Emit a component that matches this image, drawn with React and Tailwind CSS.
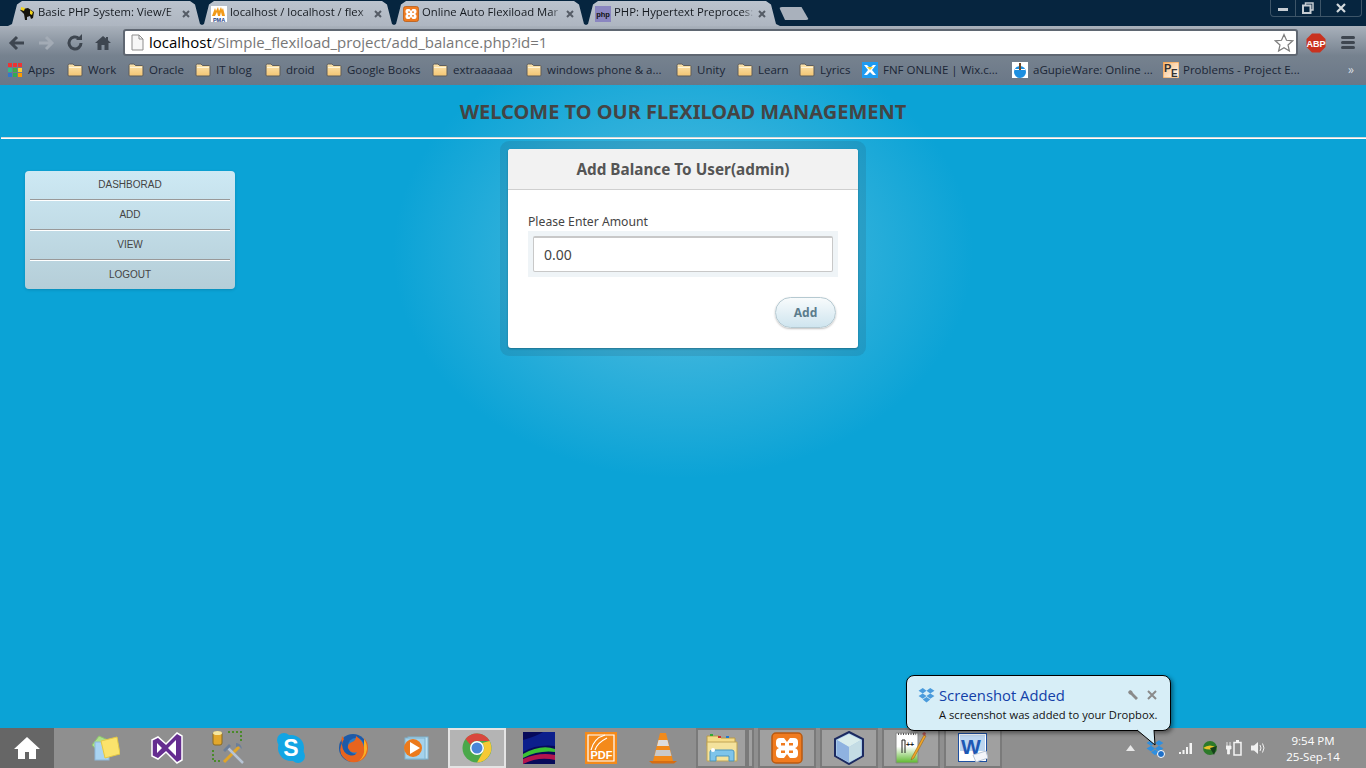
import React from "react";

const Folder = () => (
  <svg width="16" height="14" viewBox="0 0 16 14" className="shrink-0">
    <defs><linearGradient id="fg" x1="0" y1="0" x2="0" y2="1"><stop offset="0" stopColor="#fbe4ae" /><stop offset="1" stopColor="#f4c673" /></linearGradient></defs>
    <path d="M1 2.5Q1 1 2.5 1H6L7.5 2.5H14Q15 2.5 15 3.5V12Q15 13 14 13H2Q1 13 1 12Z" fill="url(#fg)" stroke="#5d5d5d" strokeWidth="1" />
    <path d="M2 4.5H14" stroke="#fff3d4" />
  </svg>
);
const Apps = () => (
  <svg width="14" height="14" viewBox="0 0 14 14" className="shrink-0">
    {[["#e33", "#e33", "#e33"], ["#3b8", "#4a4", "#fc3"], ["#37c", "#3a5", "#f90"]].map((r, y) =>
      r.map((c, x) => <rect key={x + "-" + y} x={x * 5} y={y * 5} width="4" height="4" fill={c} />))}
  </svg>
);
const Xampp = ({ s = 16 }) => (
  <svg width={s} height={s} viewBox="0 0 32 32" className="shrink-0">
    <rect x="1" y="1" width="30" height="30" rx="4" fill="#f07b1f" stroke="#b85a12" strokeWidth="1.5" />
    <path d="M9 6h4l3 4 3-4h4q4 0 4 4v2q0 3-3 4 3 1 3 4v2q0 4-4 4h-4l-3-4-3 4H9q-4 0-4-4v-2q0-3 3-4-3-1-3-4v-2q0-4 4-4Z" fill="#fff" />
    <path d="M10 11h4v2.500h-4zM18 11h4v2.500h-4zM10 18.500h4v2.500h-4zM18 18.500h4v2.500h-4z" fill="#f07b1f" />
  </svg>
);
const Elephant = () => (
  <svg width="16" height="16" viewBox="0 0 16 16" className="shrink-0">
    <path d="M4 3 9 2l6 4-1 6-2 1-1-3-3 1v3H6L5 8 1 4Z" fill="#16140c" />
    <path d="M2 1l4 1-1 3-3-1ZM11 4l3 2-1 3-2-1Z" fill="#f2d41c" />
  </svg>
);
const Pma = () => (
  <svg width="16" height="16" viewBox="0 0 16 16" className="shrink-0">
    <rect width="16" height="16" fill="#fff" />
    <path d="M1 10 4 2l1 3 2-4 1 4 2-4 1 3 1-2 2 8h-3L10 6l-1 4H7L6 6l-2 4Z" fill="#f29a18" />
    <text x="8" y="15.5" fontSize="5.5" fontWeight="700" textAnchor="middle" fill="#1c3e86" fontFamily="Liberation Sans, sans-serif">PMA</text>
  </svg>
);
const Php = () => (
  <svg width="16" height="16" viewBox="0 0 16 16" className="shrink-0">
    <rect width="16" height="16" fill="#8a86c0" />
    <text x="8" y="11" fontSize="7.5" fontWeight="700" textAnchor="middle" fill="#111" fontFamily="Liberation Sans, sans-serif">php</text>
  </svg>
);
const Wix = () => (
  <svg width="16" height="16" viewBox="0 0 16 16" className="shrink-0">
    <rect width="16" height="16" fill="#1f9bf0" />
    <path d="M2 3h3l3 3 3-3h3L10 8l4 5h-3L8 10l-3 3H2l4-5Z" fill="#fff" />
    <path d="M5 5h6L8 8Z" fill="#f6d22e" />
  </svg>
);
const Gupie = () => (
  <svg width="16" height="16" viewBox="0 0 16 16" className="shrink-0">
    <rect width="16" height="16" fill="#fff" />
    <circle cx="8" cy="10" r="6" fill="#1d8fe0" />
    <path d="M3 8h10v-1H3Z" fill="#fff" />
    <path d="M7 1h2v7H7Z" fill="#6b4a2a" />
  </svg>
);
const Pe = () => (
  <svg width="16" height="16" viewBox="0 0 16 16" className="shrink-0">
    <defs><linearGradient id="peg" x1="0" y1="0" x2="1" y2="1"><stop offset="0" stopColor="#f9b670" /><stop offset="1" stopColor="#fff" /></linearGradient></defs>
    <rect width="16" height="16" fill="url(#peg)" stroke="#f19a3e" />
    <text x="1" y="10" fontSize="11" fontWeight="700" fill="#333" fontFamily="Liberation Sans, sans-serif">P</text>
    <text x="8" y="15" fontSize="10" fontWeight="700" fill="#333" fontFamily="Liberation Sans, sans-serif">E</text>
  </svg>
);

const tabs = [
  { icon: <Elephant />, title: "Basic PHP System: View/E" },
  { icon: <Pma />, title: "localhost / localhost / flex" },
  { icon: <Xampp />, title: "Online Auto Flexiload Mar" },
  { icon: <Php />, title: "PHP: Hypertext Preproces:" },
];

const Tab = ({ icon, title }) => (
  <div className="w-[196px] h-[25px] -mr-[4px] flex items-center pl-[11px] pr-[13px] bg-gradient-to-b from-[#bbc3cd] to-[#aeb6c1] [clip-path:polygon(0_100%,4px_92%,9px_14%,14px_0,calc(100%-14px)_0,calc(100%-9px)_14%,calc(100%-4px)_92%,100%_100%)]">
    {icon}
    <span className="ml-[3px] w-[140px] pb-[2px] overflow-hidden whitespace-nowrap text-[11.3px] text-[#151a20] [mask-image:linear-gradient(to_right,#000_92%,transparent)]">{title}</span>
    <svg width="10" height="10" viewBox="0 0 10 10" className="ml-auto shrink-0"><path d="M2 2l6 6M8 2l-6 6" stroke="#555c66" strokeWidth="2" /></svg>
  </div>
);

const bookmarks = [
  { icon: <Apps />, label: "Apps", w: "w-[27px]", gap: "ml-[6px]", lead: "ml-0" },
  { icon: <Folder />, label: "Work", w: "w-[28px]", gap: "ml-[5px]", lead: "ml-[12px]" },
  { icon: <Folder />, label: "Oracle", w: "w-[34px]", gap: "ml-[5px]", lead: "ml-[12px]" },
  { icon: <Folder />, label: "IT blog", w: "w-[37px]", gap: "ml-[5px]", lead: "ml-[12px]" },
  { icon: <Folder />, label: "droid", w: "w-[28px]", gap: "ml-[5px]", lead: "ml-[12px]" },
  { icon: <Folder />, label: "Google Books", w: "w-[73px]", gap: "ml-[5px]", lead: "ml-[12px]" },
  { icon: <Folder />, label: "extraaaaaa", w: "w-[61px]", gap: "ml-[5px]", lead: "ml-[12px]" },
  { icon: <Folder />, label: "windows phone & a...", w: "w-[115px]", gap: "ml-[5px]", lead: "ml-[12px]" },
  { icon: <Folder />, label: "Unity", w: "w-[28px]", gap: "ml-[5px]", lead: "ml-[14px]" },
  { icon: <Folder />, label: "Learn", w: "w-[29px]", gap: "ml-[5px]", lead: "ml-[12px]" },
  { icon: <Folder />, label: "Lyrics", w: "w-[30px]", gap: "ml-[5px]", lead: "ml-[12px]" },
  { icon: <Wix />, label: "FNF ONLINE | Wix.c...", w: "w-[113px]", gap: "ml-[5px]", lead: "ml-[12px]" },
  { icon: <Gupie />, label: "aGupieWare: Online ...", w: "w-[117px]", gap: "ml-[5px]", lead: "ml-[16px]" },
  { icon: <Pe />, label: "Problems - Project E...", w: "w-[116px]", gap: "ml-[4px]", lead: "ml-[13px]" },
];

const Slot = ({ children, boxed, active }) => (
  <div className={"w-[58px] h-[40px] flex items-center justify-center relative " + (active ? "bg-[#b4b4b4] border-2 border-[#e4e4e4]" : boxed ? "bg-[#a0a0a0] border-2 border-[#7a7a7a]" : "")}>
    {children}
  </div>
);

const StickyIcon = () => (
  <svg width="32" height="32" viewBox="0 0 32 32" className="-ml-[3px]">
    <path d="M4 13 11 4l9 4-6 16Z" fill="#aee08a" stroke="#8ec46e" />
    <rect x="7" y="10" width="14" height="18" fill="#a9d4f2" stroke="#8db8db" />
    <path d="M13 9 29 5l3 17-15 4Z" fill="#fbe36c" stroke="#e4c844" />
  </svg>
);
const VsIcon = () => (
  <svg width="32" height="34" viewBox="0 0 32 34">
    <path d="M1 9l6-3 8 7L26 2l5 3v24l-5 3-11-11-8 7-6-3Z" fill="#652d90" stroke="#fff" strokeWidth="1.5" />
    <path d="M6 12v10l5-5ZM25 9l-8 8 8 8Z" fill="#fff" />
  </svg>
);
const BuildIcon = () => (
  <svg width="34" height="36" viewBox="0 0 34 36">
    <rect x="1" y="2" width="9" height="13" rx="2" fill="#e2a72c" stroke="#8a6a20" />
    <ellipse cx="5.5" cy="3" rx="4.5" ry="2" fill="#f5e7a0" />
    <path d="M16 2h13v10M1 20v11h9" fill="none" stroke="#4a8a2a" strokeWidth="2" strokeDasharray="2 2" />
    <path d="M12 32 27 17" stroke="#e0a52a" strokeWidth="3" />
    <path d="M31 33 16 18" stroke="#b8c4d4" strokeWidth="2.5" />
    <path d="M11 20l6-6 2 2-6 6ZM24 13q5 0 6 6l-3-3-3 1Z" fill="#6a7e9a" />
  </svg>
);
const SkypeIcon = () => (
  <svg width="30" height="32" viewBox="0 0 30 32">
    <circle cx="15" cy="16" r="13" fill="#12a5e4" />
    <circle cx="8" cy="8" r="7" fill="#12a5e4" />
    <circle cx="22" cy="24" r="7" fill="#12a5e4" />
    <text x="15" y="24" fontSize="23" fontWeight="700" textAnchor="middle" fill="#fff" fontFamily="Liberation Sans, sans-serif">S</text>
  </svg>
);
const FirefoxIcon = () => (
  <svg width="32" height="32" viewBox="0 0 32 32">
    <circle cx="16" cy="16" r="14" fill="#1d5aa8" />
    <circle cx="19" cy="14" r="8" fill="#2d7fc6" />
    <path d="M5 4q-1 5 0 7Q1 19 6 25q7 8 17 4 8-4 8-13 0-6-4-10 2 5 0 9-1-6-8-11 0 5-4 6-5 2-4 6 3 6 9 4-2 5-8 3-6-2-7-10 0-3 2-6Z" fill="#e8641e" />
    <path d="M27 7q3 4 3 10-1 8-8 12 6-5 5-13Z" fill="#f9b125" />
  </svg>
);
const WmpIcon = () => (
  <svg width="28" height="28" viewBox="0 0 28 28">
    <rect x="7" y="3" width="20" height="22" fill="#bde0f2" stroke="#7fb4d0" />
    <rect x="4" y="4" width="20" height="21" fill="#a4d2ec" stroke="#7fb4d0" />
    <circle cx="12" cy="14" r="9" fill="#ec7a1c" />
    <path d="M9 8l10 6-10 6Z" fill="#fff" />
  </svg>
);
const ChromeIcon = () => (
  <svg width="30" height="30" viewBox="0 0 30 30">
    <circle cx="15" cy="15" r="14.5" fill="#4aa84a" />
    <path d="M15 .5A14.5 14.5 0 0 1 27.6 8H15A7 7 0 0 0 8.5 12L3.5 6A14.5 14.5 0 0 1 15 .5Z" fill="#d9473d" />
    <path d="M27.6 8A14.5 14.5 0 0 1 15 29.5L21 19A7 7 0 0 0 20 10Z" fill="#f6c934" />
    <circle cx="15" cy="15" r="7" fill="#fff" />
    <circle cx="15" cy="15" r="5.5" fill="#4a86d8" />
  </svg>
);
const SwirlIcon = () => (
  <svg width="32" height="32" viewBox="0 0 32 32">
    <rect width="32" height="32" fill="#060a5a" />
    <path d="M0 8Q14 4 20 0h12v14Q14 12 0 20Z" fill="#0c1f8c" />
    <path d="M0 22Q18 12 32 17v3Q16 18 0 26Z" fill="#3bc234" />
    <path d="M0 27Q16 20 32 23v5Q16 24 0 32Z" fill="#b3154e" />
  </svg>
);
const PdfIcon = () => (
  <svg width="32" height="32" viewBox="0 0 32 32">
    <rect width="32" height="32" fill="#f48a1a" />
    <path d="M3 3h26v26H3Z" fill="none" stroke="#fff" strokeWidth="1.2" />
    <path d="M6 18Q9 6 20 3M10 18Q12 11 22 6" fill="none" stroke="#fff" strokeWidth="1.2" />
    <text x="16.5" y="27" fontSize="11" fontWeight="700" textAnchor="middle" fill="#fff" fontFamily="Liberation Sans, sans-serif">PDF</text>
  </svg>
);
const VlcIcon = () => (
  <svg width="28" height="32" viewBox="0 0 28 32">
    <path d="M0 29h28l-3 2.5H3Z" fill="#d66d12" />
    <path d="M11 1h6l7 28H4Z" fill="#f28a1a" />
    <path d="M9.5 8h9l1.5 6H8Z" fill="#ddd" />
    <path d="M7 18h14l1.5 6h-17Z" fill="#c9c9c9" />
  </svg>
);
const ExplorerIcon = () => (
  <svg width="32" height="32" viewBox="0 0 32 32" className="-ml-[6px]">
    <path d="M1 4h12l2 2h14v8H1Z" fill="#f5dc88" stroke="#b89a4a" />
    <rect x="4" y="2" width="3" height="2" fill="#3a3" /><rect x="12" y="4" width="3" height="2" fill="#c33" /><rect x="20" y="4" width="3" height="2" fill="#27c" />
    <path d="M1 10h30v19H1Z" fill="#f4e29c" stroke="#c0a454" />
    <path d="M4 29V20q0-2 2-2h20q2 0 2 2v9h-5v-5H10v5Z" fill="#7ec4ea" stroke="#4b94bd" />
    <circle cx="7" cy="18" r="2" fill="#fff" />
  </svg>
);
const CubeIcon = () => (
  <svg width="32" height="34" viewBox="0 0 32 34">
    <path d="M16 1 30 8v17L16 33 2 25V8Z" fill="#a6c8e8" stroke="#1c2a60" strokeWidth="2" />
    <path d="M16 3 28 9 16 16 4 9Z" fill="#d9ecec" />
    <path d="M16 16v15L28 25V9Z" fill="#c4dce4" />
    <path d="M16 16v15L4 25V9Z" fill="#8fb2e0" />
  </svg>
);
const NppIcon = () => (
  <svg width="32" height="36" viewBox="0 0 32 36">
    <defs><linearGradient id="npg" x1="0" y1="0" x2="0" y2="1"><stop offset="0.45" stopColor="#fff" /><stop offset="1" stopColor="#5cb82c" /></linearGradient></defs>
    <path d="M1 3h22v30H1Z" fill="url(#npg)" stroke="#888" />
    <path d="M3 4h18" stroke="#555" strokeDasharray="1 1.5" strokeWidth="2" />
    <path d="M7 10v13M10 10v13M7 10h3" stroke="#222" fill="none" />
    <text x="11" y="17" fontSize="7" fontWeight="700" fill="#222" fontFamily="Liberation Sans, sans-serif">++</text>
    <path d="M17 27 29 5l2 1-12 22-3 2Z" fill="#f0a52a" stroke="#8a5a10" strokeWidth="0.5" />
    <path d="M27 4l2-2 2 1-1 3Z" fill="#a85050" />
  </svg>
);
const WordIcon = () => (
  <svg width="30" height="30" viewBox="0 0 30 30">
    <rect x="0.5" y="0.5" width="28" height="28" fill="#fff" stroke="#1d4fa0" />
    <rect x="2" y="2" width="25" height="16" fill="#bcd5f0" />
    <text x="13" y="21" fontSize="21" fontWeight="700" textAnchor="middle" fill="#1d58b4" fontFamily="Liberation Sans, sans-serif">W</text>
    <path d="M15 22l13-4 2 7-12 4Z" fill="#f4f6fa" stroke="#b8c4d4" />
  </svg>
);
const DropIcon = ({ s = 16, c = "#3f93d6" }) => (
  <svg width={s} height={s} viewBox="0 0 16 16" className="shrink-0">
    <path d="M4.5 1 8 3.500 4.500 6 .5 3.500ZM11.500 1 15.500 3.500 11.500 6 8 3.500ZM4.500 6 8 8.500 4.500 11 .5 8.500ZM11.500 6 15.500 8.500 11.500 11 8 8.500ZM4.500 11.700 8 9.300l3.500 2.400L8 14.500Z" fill={c} />
  </svg>
);

const menu = ["DASHBORAD", "ADD", "VIEW", "LOGOUT"];

export default function App() {
  return (
    <div className="w-[1366px] h-[768px] flex flex-col overflow-hidden relative font-['Open_Sans',sans-serif]">
      {/* tab strip */}
      <div className="h-[26px] shrink-0 bg-[#06253f] flex items-end pl-[8px] relative">
        {tabs.map((t) => <Tab key={t.title} {...t} />)}
        <div className="ml-[3px] mb-[6px] w-[30px] h-[13px] bg-[#a9b1bc] [clip-path:polygon(0_0,75%_0,100%_100%,20%_100%)] rounded-[3px]" />
        <div className="ml-auto mr-[4px] self-start h-[17px] w-[92px] flex border border-t-0 border-[#3d5568] rounded-b-[4px]">
          <div className="w-[25px] flex items-center justify-center border-r border-[#3d5568]"><div className="w-[10px] h-[3px] mt-[3px] bg-[#c5ccd2]" /></div>
          <div className="w-[25px] flex items-center justify-center border-r border-[#3d5568]">
            <svg width="12" height="12" viewBox="0 0 12 12"><path d="M3.5 3V1h7.500v7H9" fill="none" stroke="#c5ccd2" strokeWidth="1.500" /><rect x="1" y="3.500" width="7.500" height="7.500" fill="none" stroke="#c5ccd2" strokeWidth="2" /></svg>
          </div>
          <div className="flex-1 flex items-center justify-center">
            <svg width="10" height="10" viewBox="0 0 10 10"><path d="M1 1l8 8M9 1l-8 8" stroke="#d4dade" strokeWidth="2.200" /></svg>
          </div>
        </div>
      </div>
      {/* toolbar + bookmarks */}
      <div className="h-[59px] shrink-0 bg-gradient-to-b from-[#a9b1bb] via-[#76828f] via-50% to-[#6a7787] flex flex-col">
        <div className="h-[33px] flex items-center pl-[7px] pr-[7px]">
          <svg width="20" height="20" viewBox="0 0 20 20" className="shrink-0"><path d="M17 10H6M10 4l-6 6 6 6" fill="none" stroke="#3e4650" strokeWidth="3" /></svg>
          <svg width="20" height="20" viewBox="0 0 20 20" className="ml-[9px] shrink-0"><path d="M3 10h11M10 4l6 6-6 6" fill="none" stroke="#a3abb5" strokeWidth="3" /></svg>
          <svg width="20" height="20" viewBox="0 0 20 20" className="ml-[9px] shrink-0"><path d="M16 10a6 6 0 1 1-2-4.500" fill="none" stroke="#3e4650" strokeWidth="3" /><path d="M11 7h6V1Z" fill="#3e4650" /></svg>
          <svg width="18" height="18" viewBox="0 0 18 18" className="ml-[9px] shrink-0"><path d="M9 2 1 9h2.500v7h4v-5h3v5h4V9H17l-3-2.700V3h-2v1.500Z" fill="#3e4650" /></svg>
          <div className="ml-[11px] w-[1175px] h-[27px] bg-white border-2 border-[#5f6772] rounded-[3px] flex items-center pl-[5px] pr-[2px]">
            <svg width="14" height="17" viewBox="0 0 14 17" className="shrink-0"><path d="M2 1h7l4 4v11H2Z" fill="#f7f7f7" stroke="#8d8d8d" /><path d="M9 1v4h4" fill="none" stroke="#8d8d8d" /></svg>
            <span className="ml-[5px] text-[15px] leading-none whitespace-nowrap text-[#777]"><span className="text-black">localhost</span>/Simple_flexiload_project/add_balance.php?id=1</span>
            <svg width="20" height="19" viewBox="0 0 20 19" className="ml-auto shrink-0"><path d="M10 1.500 12.500 7.300 18.700 7.800 14 12 15.400 18 10 14.800 4.600 18 6 12 1.300 7.800 7.500 7.300Z" fill="#fff" stroke="#7e7e7e" strokeWidth="1.200" /></svg>
          </div>
          <svg width="20" height="20" viewBox="0 0 20 20" className="ml-[8px] shrink-0">
            <path d="M6 .5h8L19.500 6v8L14 19.500H6L.5 14V6Z" fill="#c9321f" />
            <text x="10" y="13.500" fontSize="9" fontWeight="700" textAnchor="middle" fill="#fff" fontFamily="Liberation Sans, sans-serif">ABP</text>
          </svg>
          <div className="ml-[15px] w-[14px] flex flex-col gap-[2px]">
            <div className="h-[3px] bg-[#3e4650] rounded-sm" /><div className="h-[3px] bg-[#3e4650] rounded-sm" /><div className="h-[3px] bg-[#3e4650] rounded-sm" />
          </div>
        </div>
        <div className="flex-1 flex items-center pl-[8px] pr-[12px] pb-[5px] text-[11.5px] text-[#1b2636]">
          {bookmarks.map((b) => (
            <div key={b.label} className={"flex items-center shrink-0 " + b.lead}>
              {b.icon}
              <span className={"whitespace-nowrap overflow-visible " + b.w + " " + b.gap}>{b.label}</span>
            </div>
          ))}
          <span className="ml-auto text-[12px] text-[#d8dde2]">»</span>
        </div>
      </div>
      {/* page */}
      <div className="flex-1 bg-[#0ba3d6] bg-[radial-gradient(ellipse_290px_225px_at_683px_168px,#46badf_0%,#3ab4dc_42%,#0ba3d6_100%)] flex flex-col">
        <div className="h-[52px] flex items-center justify-center pt-[2px]">
          <h1 className="text-[20px] font-bold text-[#444] font-['Noto_Sans',sans-serif] whitespace-nowrap">WELCOME TO OUR FLEXILOAD MANAGEMENT</h1>
        </div>
        <div className="ml-[1px] h-[2px] border-t border-[#d7d7d7] bg-white shrink-0" />
        <div className="flex items-start">
          <nav className="ml-[25px] mt-[32px] w-[210px] h-[118px] rounded-[4px] bg-gradient-to-b from-[#cde9f4] to-[#b5ced8] shadow-[0_1px_3px_rgba(0,0,0,0.15)] flex flex-col px-[5px] font-['Liberation_Sans',sans-serif]">
            {menu.map((m, i) => (
              <div key={m} className={"h-[30px] shrink-0 flex items-center justify-center text-[10px] text-[#444] " + (i < 3 ? "pb-[2px] border-b border-b-white shadow-[inset_0_-1px_0_#999]" : "pb-[4px]")}>{m}</div>
            ))}
          </nav>
          <div className="ml-[273px] mt-[10px] w-[350px] h-[199px] bg-white rounded-[3px] shadow-[0_0_0_8px_rgba(40,70,90,0.15),0_1px_2px_rgba(0,0,0,0.3)] flex flex-col font-['Noto_Sans',sans-serif]">
            <div className="h-[41px] shrink-0 bg-[#f2f2f2] border-b border-[#cfcfcf] rounded-t-[3px] flex items-center justify-center text-[15.3px] font-bold text-[#555]">Add Balance To User(admin)</div>
            <div className="px-[20px] pt-[23px] flex flex-col">
              <label className="text-[12.2px] leading-[18px] text-[#444]">Please Enter Amount</label>
              <div className="bg-[#eff4f7] p-[5px]">
                <div className="h-[36px] bg-white border border-[#c8c8c8] border-t-2 rounded-[2px] flex items-center pl-[10px] text-[14px] text-[#444]">0.00</div>
              </div>
              <div className="flex justify-end mt-[20px] pr-[2px]">
                <button className="w-[61px] h-[31px] pt-[1px] rounded-full border border-[#b5c9d1] bg-gradient-to-b from-[#f8fbfc] to-[#cfe5ef] shadow-[0_1px_2px_rgba(0,0,0,0.25)] text-[12px] font-bold text-[#5b7c8c]">Add</button>
              </div>
            </div>
          </div>
        </div>
      </div>
      {/* taskbar */}
      <div className="h-[40px] shrink-0 bg-[#8f8f8f] flex items-center">
        <div className="w-[54px] h-full bg-[#666] flex items-center justify-center">
          <svg width="28" height="24" viewBox="0 0 28 24"><path d="M14 1 1 13h4v10h7v-7h4v7h7V13h4Z" fill="#fff" /></svg>
        </div>
        <div className="ml-[22px] flex gap-[4px] items-center">
          <Slot><StickyIcon /></Slot>
          <Slot><VsIcon /></Slot>
          <Slot><BuildIcon /></Slot>
          <Slot><SkypeIcon /></Slot>
          <Slot><FirefoxIcon /></Slot>
          <Slot><WmpIcon /></Slot>
          <Slot active><ChromeIcon /></Slot>
          <Slot><SwirlIcon /></Slot>
          <Slot><PdfIcon /></Slot>
          <Slot><VlcIcon /></Slot>
          <Slot boxed><ExplorerIcon /><div className="absolute right-[3px] top-[-2px] bottom-[-2px] w-[4px] border-x-2 border-[#7a7a7a]" /></Slot>
          <Slot boxed><Xampp s={32} /></Slot>
          <Slot boxed><CubeIcon /></Slot>
          <Slot boxed><NppIcon /></Slot>
          <Slot boxed><WordIcon /></Slot>
        </div>
        <div className="ml-[124px] flex items-center">
          <svg width="9" height="6" viewBox="0 0 9 6" className="shrink-0"><path d="M0 6 4.500 0 9 6Z" fill="#e8e8e8" /></svg>
          <div className="ml-[11px] relative">
            <DropIcon s={18} c="#2f8fe0" />
            <div className="absolute right-[-1px] bottom-[-1px] w-[8px] h-[8px] rounded-full bg-[#1d6fc8] border border-white" />
          </div>
          <svg width="16" height="14" viewBox="0 0 16 14" className="ml-[14px] shrink-0"><path d="M1 11h2v2H1ZM4.500 9h2v4h-2ZM8 6h2v7H8ZM11.500 2h2.500v11h-2.500Z" fill="#f4f4f4" /></svg>
          <svg width="16" height="16" viewBox="0 0 16 16" className="ml-[8px] shrink-0"><circle cx="8" cy="8" r="7" fill="#2d7a2a" /><path d="M1 8q7-5 14 0-7 3-14 0Z" fill="#e8c22a" /><path d="M8 8l7-2-3 9Z" fill="#15401a" /></svg>
          <svg width="16" height="16" viewBox="0 0 16 16" className="ml-[8px] shrink-0"><path d="M1 2v4M4 2v4M0 6h5v3H3.500v5H1.500V9H0Z" stroke="#f4f4f4" fill="#f4f4f4" strokeWidth="0.800" /><rect x="8" y="2.500" width="7" height="12.500" fill="none" stroke="#f4f4f4" strokeWidth="1.500" /><path d="M10 1h3" stroke="#f4f4f4" strokeWidth="2" /></svg>
          <svg width="16" height="16" viewBox="0 0 16 16" className="ml-[8px] shrink-0"><path d="M1 5.500h3L8 2v12L4 10.500H1Z" fill="#f0f0f0" /><path d="M10 5q2 3 0 6M12.500 3.500q3 4.500 0 9" fill="none" stroke="#f0f0f0" /></svg>
        </div>
        <div className="ml-auto w-[80px] mr-[13px] pt-[2px] flex flex-col items-center text-[11.5px] leading-[16px] text-white">
          <span>9:54 PM</span>
          <span>25-Sep-14</span>
        </div>
      </div>
      {/* balloon */}
      <div className="absolute left-[906px] top-[675px] w-[265px] h-[56px] rounded-[8px] bg-[#d7eef7] border border-black shadow-[2px_2px_4px_rgba(0,0,0,0.45)] pl-[11px] pt-[8px]">
        <div className="flex items-center">
          <DropIcon s={17} c="#4a9bdc" />
          <span className="ml-[4px] text-[14.800px] leading-[22px] whitespace-nowrap text-[#1240a8]">Screenshot Added</span>
          <svg width="12" height="12" viewBox="0 0 12 12" className="ml-[62px] shrink-0"><path d="M1 3l2-2 2 1 1 2 5 5-2 2-5-5-2-1Z" fill="#8a8a8a" /></svg>
          <svg width="10" height="10" viewBox="0 0 10 10" className="ml-[8px] shrink-0"><path d="M1 1l8 8M9 1l-8 8" stroke="#8a8a8a" strokeWidth="2" /></svg>
        </div>
        <div className="pl-[21px] pt-[1px] text-[11.200px] leading-[15px] text-[#111] whitespace-nowrap">A screenshot was added to your Dropbox.</div>
      </div>
      <svg width="26" height="18" viewBox="0 0 26 18" className="absolute left-[1137px] top-[729px]"><path d="M0 1 18 16 17 1Z" fill="#d7eef7" /><path d="M0 1 18 16M18 16 17 1" stroke="#000" /></svg>
    </div>
  );
}
